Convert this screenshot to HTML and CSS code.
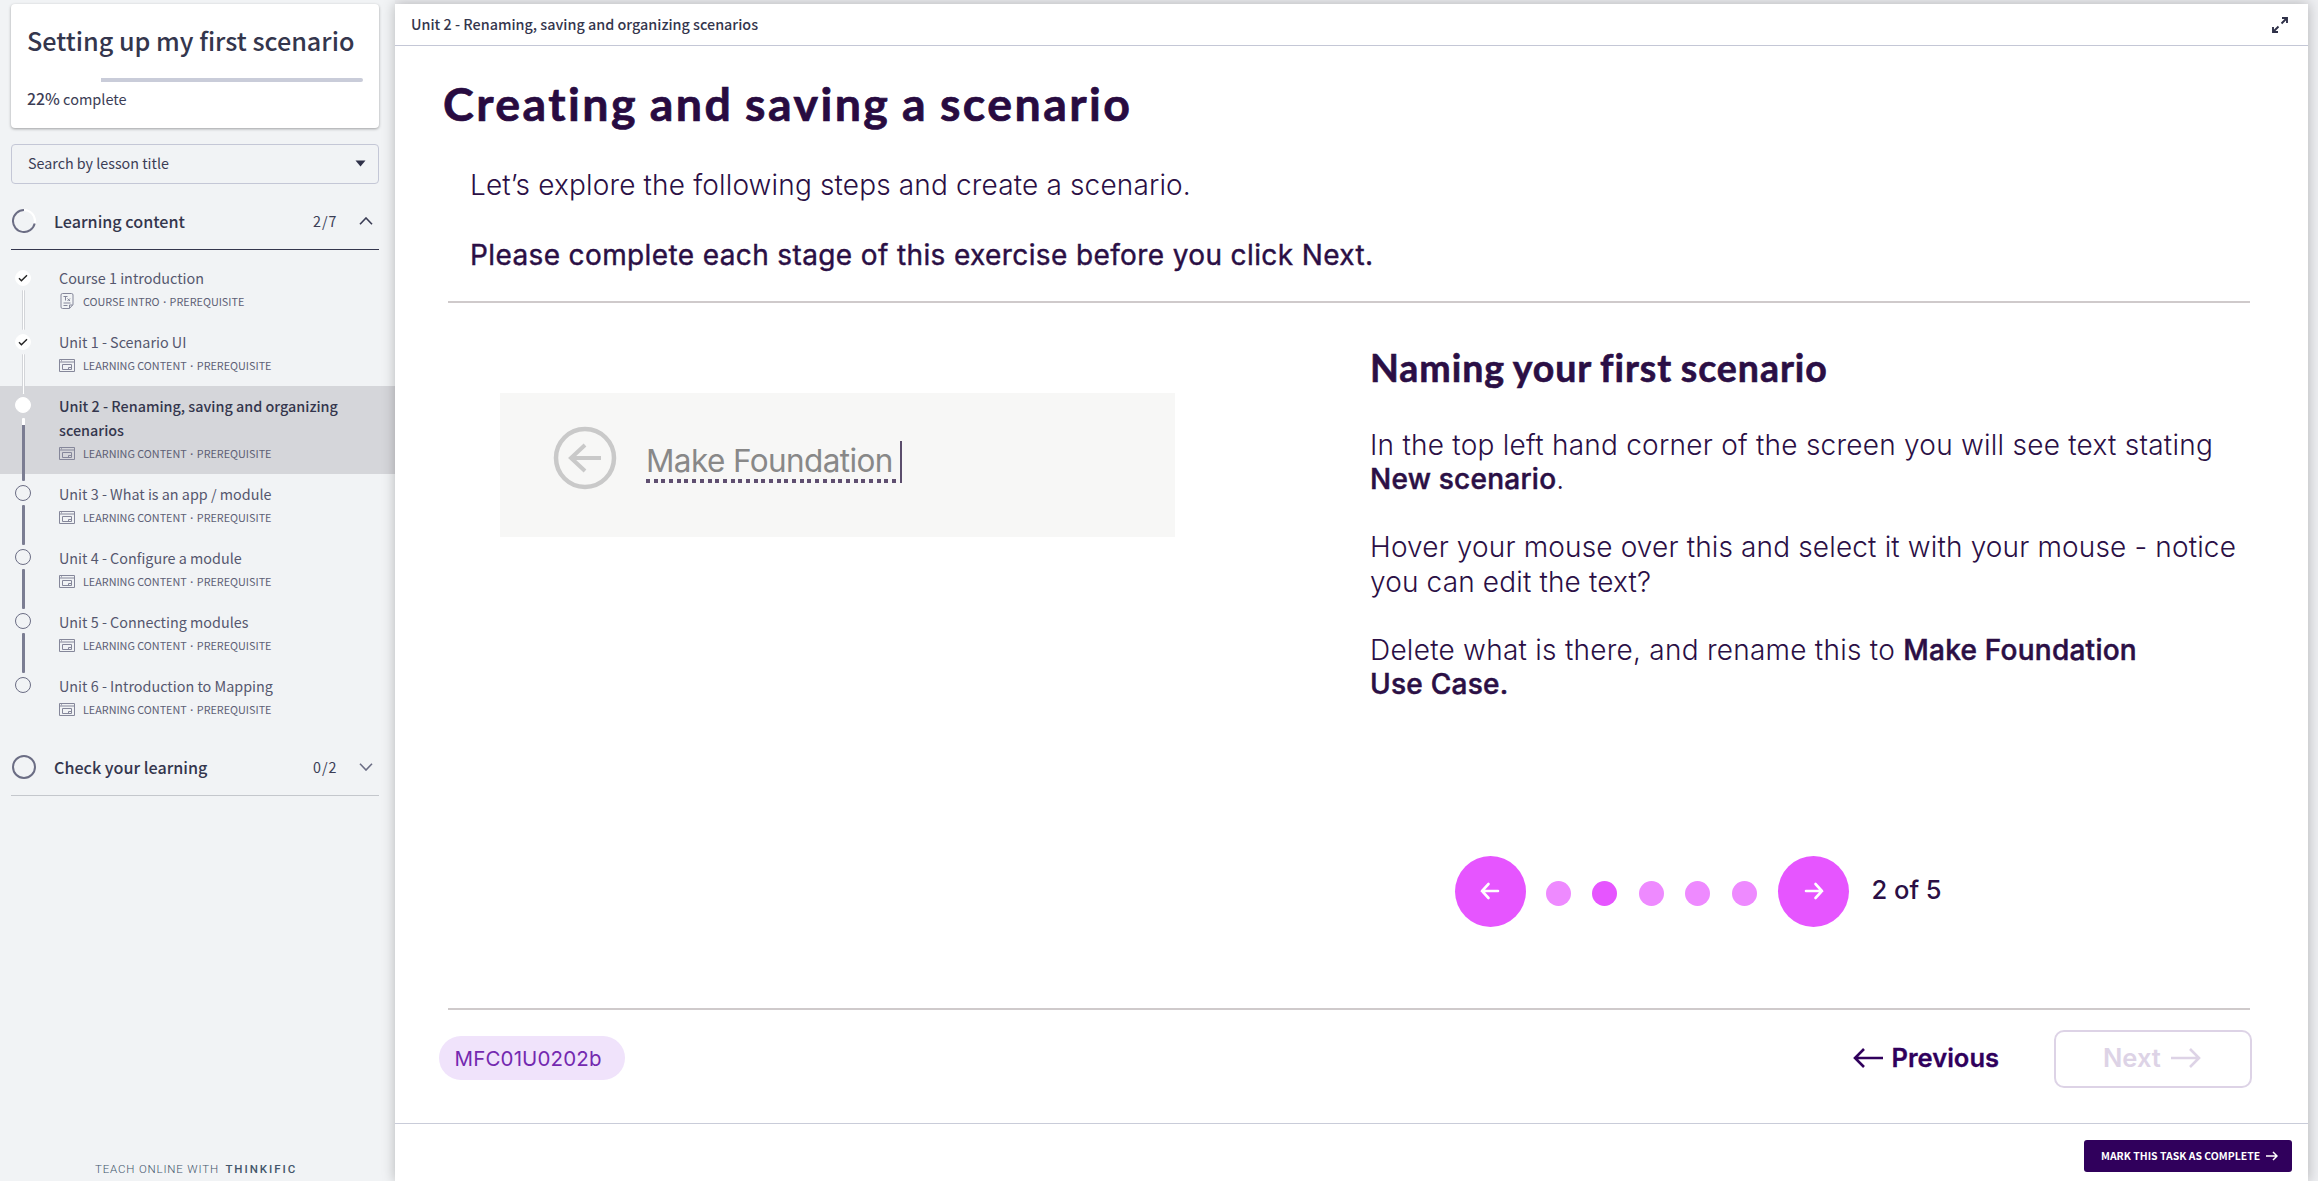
FILE: index.html
```html
<!DOCTYPE html>
<html lang="en">
<head>
<meta charset="utf-8">
<title>Setting up my first scenario</title>
<link rel="stylesheet" href="styles.css">
</head>
<body>
<svg class="defs" width="0" height="0">
  <symbol id="i-media" viewBox="0 0 16 13"><path d="M.5.5h15v12H.5zM.5 3h15M3.500 5.500h9v5h-9zM9.500 10.500v-2h3M2 1.800h1" fill="none" stroke="currentColor"/></symbol>
  <symbol id="i-text" viewBox="0 0 13 16"><path d="M2 .5h9a1.500 1.500 0 0 1 1.500 1.500v9.500l-3.500 4H2A1.500 1.500 0 0 1 .5 14V2A1.500 1.500 0 0 1 2 .5zM9 15.300V12h3.400M3 3.500h4M5 3.500v4M7 5.500l2.500 2.500M9.500 5.500L7 8M3 10h7M3 12.500h4" fill="none" stroke="currentColor"/></symbol>
  <symbol id="i-check" viewBox="0 0 10 8"><path d="M1 4.300l2.400 2.400L9 1.200" fill="none" stroke="currentColor" stroke-width="1.400"/></symbol>
  <symbol id="i-left" viewBox="0 0 30 20"><path d="M30 10H2M11 1L2 10l9 9" fill="none" stroke="currentColor" stroke-width="2.600"/></symbol>
  <symbol id="i-right" viewBox="0 0 30 20"><path d="M0 10h28M19 1l9 9-9 9" fill="none" stroke="currentColor" stroke-width="2.600"/></symbol>
</svg>
<div class="app">
  <aside class="sidebar">
    <section class="course-card">
      <h1 class="course-title">Setting up my first scenario</h1>
      <div class="progress"><div class="progress-rest" style="width:78%"></div></div>
      <p class="percent"><b>22%</b> complete</p>
    </section>
    <div class="search"><span>Search by lesson title</span><svg width="11" height="7" viewBox="0 0 11 7"><path d="M.5.500h10L5.500 6.500z" fill="#2f3149"/></svg></div>
    <header class="chapter open">
      <svg class="ring" width="24" height="24" viewBox="0 0 24 24"><circle cx="12" cy="12" r="11" fill="none" stroke="#fff" stroke-width="2"/><path d="M12 1a11 11 0 1 0 10.700 13.500" fill="none" stroke="#6b6d84" stroke-width="2"/></svg>
      <span class="chapter-name">Learning content</span><span class="count">2/7</span>
      <svg class="chev" width="14" height="8" viewBox="0 0 14 8"><path d="M1 7.300L7 1l6 6.300" fill="none" stroke="#3b3d55" stroke-width="1.600"/></svg>
    </header>
    <ul class="lessons">
      <li class="lesson done"><div class="rail"><span class="dot"><svg width="10" height="8"><use href="#i-check"/></svg></span><span class="line"></span></div><div class="info"><div class="name">Course 1 introduction</div><div class="meta"><svg width="16" height="16"><use href="#i-text"/></svg><span>COURSE INTRO <i>·</i> PREREQUISITE</span></div></div></li>
      <li class="lesson done"><div class="rail"><span class="dot"><svg width="10" height="8"><use href="#i-check"/></svg></span><span class="line"></span></div><div class="info"><div class="name">Unit 1 - Scenario UI</div><div class="meta"><svg width="16" height="13"><use href="#i-media"/></svg><span>LEARNING CONTENT <i>·</i> PREREQUISITE</span></div></div></li>
      <li class="lesson active"><div class="rail"><span class="dot"></span><span class="line"></span></div><div class="info"><div class="name">Unit 2 - Renaming, saving and organizing<br>scenarios</div><div class="meta"><svg width="16" height="13"><use href="#i-media"/></svg><span>LEARNING CONTENT <i>·</i> PREREQUISITE</span></div></div></li>
      <li class="lesson"><div class="rail"><span class="dot"></span><span class="line"></span></div><div class="info"><div class="name">Unit 3 - What is an app / module</div><div class="meta"><svg width="16" height="13"><use href="#i-media"/></svg><span>LEARNING CONTENT <i>·</i> PREREQUISITE</span></div></div></li>
      <li class="lesson"><div class="rail"><span class="dot"></span><span class="line"></span></div><div class="info"><div class="name">Unit 4 - Configure a module</div><div class="meta"><svg width="16" height="13"><use href="#i-media"/></svg><span>LEARNING CONTENT <i>·</i> PREREQUISITE</span></div></div></li>
      <li class="lesson"><div class="rail"><span class="dot"></span><span class="line"></span></div><div class="info"><div class="name">Unit 5 - Connecting modules</div><div class="meta"><svg width="16" height="13"><use href="#i-media"/></svg><span>LEARNING CONTENT <i>·</i> PREREQUISITE</span></div></div></li>
      <li class="lesson"><div class="rail"><span class="dot"></span></div><div class="info"><div class="name">Unit 6 - Introduction to Mapping</div><div class="meta"><svg width="16" height="13"><use href="#i-media"/></svg><span>LEARNING CONTENT <i>·</i> PREREQUISITE</span></div></div></li>
    </ul>
    <header class="chapter">
      <svg class="ring" width="24" height="24" viewBox="0 0 24 24"><circle cx="12" cy="12" r="11" fill="none" stroke="#6b6d84" stroke-width="2"/></svg>
      <span class="chapter-name">Check your learning</span><span class="count">0/2</span>
      <svg class="chev" width="14" height="8" viewBox="0 0 14 8"><path d="M1 .700L7 7l6-6.300" fill="none" stroke="#6b6d84" stroke-width="1.600"/></svg>
    </header>
    <footer class="brand"><span>TEACH ONLINE WITH</span><b>THINKIFIC</b></footer>
  </aside>
  <main class="main">
    <header class="topbar"><span>Unit 2 - Renaming, saving and organizing scenarios</span>
      <svg width="16" height="16" viewBox="0 0 16 16"><path d="M9.500 6.500l5-5M10 1h5v5M6.500 9.500l-5 5M1 10v5h5" fill="none" stroke="#2f3149" stroke-width="1.900"/></svg></header>
    <article class="slide">
      <h2 class="slide-title">Creating and saving a scenario</h2>
      <p class="lead">Let’s explore the following steps and create a scenario.</p>
      <p class="lead strong">Please complete each stage of this exercise before you click Next.</p>
      <div class="rule"></div>
      <div class="columns">
        <figure class="shot">
          <svg width="64" height="64" viewBox="0 0 64 64"><circle cx="32" cy="32" r="29" fill="none" stroke="#c9c9c9" stroke-width="4.500"/><path d="M48 32H18M32 19L18 32l14 13" fill="none" stroke="#c9c9c9" stroke-width="4"/></svg>
          <span class="field">Make Foundation</span>
        </figure>
        <section class="copy">
          <h3>Naming your first scenario</h3>
          <p>In the top left hand corner of the screen you will see text stating<br><b>New scenario</b>.</p>
          <p>Hover your mouse over this and select it with your mouse - notice<br>you can edit the text?</p>
          <p>Delete what is there, and rename this to <b>Make Foundation</b><br><b>Use Case.</b></p>
          <nav class="pager">
            <span class="round"><svg width="20" height="18" viewBox="0 0 20 18"><path d="M18 9H2M8.500 2L2 9l6.500 7" fill="none" stroke="#fff" stroke-width="2.600" stroke-linecap="round"/></svg></span>
            <span class="pip"></span><span class="pip on"></span><span class="pip"></span><span class="pip"></span><span class="pip"></span>
            <span class="round"><svg width="20" height="18" viewBox="0 0 20 18"><path d="M2 9h16M11.500 2L18 9l-6.500 7" fill="none" stroke="#fff" stroke-width="2.600" stroke-linecap="round"/></svg></span>
            <span class="page">2 of 5</span>
          </nav>
        </section>
      </div>
      <div class="rule"></div>
      <div class="controls">
        <span class="code">MFC01U0202b</span>
        <span class="prev"><svg width="30" height="20"><use href="#i-left"/></svg><span>Previous</span></span>
        <span class="next"><span>Next</span><svg width="30" height="20"><use href="#i-right"/></svg></span>
      </div>
    </article>
    <footer class="bottombar"><span class="complete"><span>MARK THIS TASK AS COMPLETE</span><svg width="12" height="10" viewBox="0 0 12 10"><path d="M0 5h11M7 1l4 4-4 4" fill="none" stroke="#fff" stroke-width="1.500"/></svg></span></footer>
  </main>
</div>
</body>
</html>
```
FILE: styles.css
```css
* { box-sizing: border-box; }
body, h1, h2, h3, p, ul, figure { margin: 0; padding: 0; }
body { background: #f1f3f5; font-family: "Noto Sans CJK SC", sans-serif; color: #3b3d55; }
svg { display: block; flex: none; }
.defs { position: absolute; }
.app { display: flex; height: 1181px; padding: 4px 10px 0 0; overflow: hidden; background: linear-gradient(90deg, #f1f3f5 395px, #edeef1 395px); }

/* Course navigation */
.sidebar { width: 395px; flex: none; display: flex; flex-direction: column; }
.course-card { margin: 0 16px 0 11px; height: 124px; padding: 21px 16px 0 16px; background: #fff; border-radius: 4px; box-shadow: 0 1px 3px rgba(0,0,0,.35); }
.course-title { font-size: 25.200px; line-height: 30px; font-weight: 500; white-space: nowrap; color: #34364d; }
.progress { margin-top: 23px; height: 4px; display: flex; justify-content: flex-end; }
.progress-rest { background: #c9ccd9; border-radius: 0 2px 2px 0; }
.percent { margin-top: 7px; font-size: 14.500px; line-height: 20px; }
.percent b { font-size: 15.800px; font-weight: 500; }
.search { margin: 16px 16px 0 11px; height: 40px; padding: 0 12px 2px 16px; border: 1px solid #c4c7d6; border-radius: 4px; display: flex; align-items: center; justify-content: space-between; font-size: 14.300px; }
.search span { padding-bottom: 1px; }
.chapter { margin: 0 16px 0 11px; height: 66px; padding: 25px 6px 0 1px; display: flex; align-items: flex-start; border-bottom: 1px solid #c4c7cc; }
.chapter.open { border-color: #34364d; }
.chapter-name { margin-left: 18px; flex: 1; font-size: 16.150px; font-weight: 500; line-height: 24px; color: #34364d; }
.count { font-size: 14.300px; letter-spacing: 1px; line-height: 24px; margin-right: 21.500px; }
.chev { margin-top: 8px; }
.lessons { list-style: none; margin-top: 8px; }
.lesson { height: 64px; display: flex; padding-left: 15px; color: #55576e; }
.lesson.active { height: 88px; background: #d5d6da; color: #34364d; }
.rail { width: 16px; display: flex; flex-direction: column; align-items: center; padding-top: 11px; }
.done .rail { padding-top: 12px; }
.dot { width: 16px; height: 16px; flex: none; border: 1px solid #6b6d84; border-radius: 50%; display: flex; align-items: center; justify-content: center; }
.done .dot, .active .dot { background: #fff; border-color: #fff; color: #222; }
.line { width: 3px; height: 40px; margin-top: 4px; flex: none; border-radius: 1px; background: #7b7d92; position: relative; z-index: 1; }
.done .line { background: #fff; border: solid #d3d5d9; border-width: 0 1px; }
.active .line { height: 63px; margin-top: 5px; background: linear-gradient(#fff 7px, #7b7d92 7px); }
.info { margin-left: 28px; padding-top: 8px; }
.name { font-size: 14.360px; line-height: 24px; white-space: nowrap; }
.active .name { font-weight: 500; }
.meta { display: flex; align-items: center; gap: 8px; height: 20px; margin-top: 1px; font-size: 10.800px; line-height: 20px; white-space: nowrap; color: #5d5f75; }
.meta svg { color: #85879a; }
.meta i { font: 700 10px "Open Sans", sans-serif; margin: 0 1.200px; }
.brand { margin: auto 0 0 95px; height: 23px; font: 300 11.500px/23px Roboto, sans-serif; letter-spacing: .830px; color: #43566b; white-space: nowrap; }
.brand b { font-weight: 500; letter-spacing: 1.950px; margin-left: 6.500px; }

/* Lesson panel */
.main { flex: 1; display: flex; flex-direction: column; background: #fff; box-shadow: 0 0 12px rgba(0,0,0,.25); }
.topbar { height: 42px; flex: none; border-bottom: 1px solid #c4c7d6; padding: 0 20px 0 16px; display: flex; align-items: center; justify-content: space-between; font-size: 14.360px; font-weight: 500; color: #34364d; }
.topbar span { padding-bottom: 2px; }
.slide { height: 1077px; flex: none; padding: 27px 56px 0 44px; font-family: Inter, sans-serif; color: #2b0f45; white-space: nowrap; display: flex; flex-direction: column; }
.slide-title { font: 700 46.500px/60px Lato, sans-serif; margin-left: 4px; color: #280b41; letter-spacing: 2.450px; word-spacing: -2px; -webkit-text-stroke: .7px; }
.lead { margin: 35px 0 0 31px; font-size: 28px; line-height: 34px; font-weight: 300; letter-spacing: .150px; }
.lead.strong { margin-top: 36px; font-weight: 400; letter-spacing: .380px; -webkit-text-stroke: .4px; }
.rule { height: 2px; flex: none; margin: 0 2px 0 9px; background: #cfcacb; }
.lead + .rule { margin-top: 29px; }
.columns { height: 705px; display: flex; }
.shot { width: 675px; height: 144px; margin: 90px 195px 0 61px; padding: 33px 0 0 53px; display: flex; background: #f7f7f6; }
.field { margin: 15px 0 0 29px; width: 256px; height: 42px; border-right: 2px solid #5b4d6c; font: 400 31.500px/40px Inter, sans-serif; letter-spacing: -.6px; color: #888; background: repeating-linear-gradient(90deg, #5f4f70 0 4px, transparent 4px 7.690px) 0 100%/100% 4px no-repeat; }
.copy { padding-top: 42px; }
.copy h3 { font: 700 37.500px/46px Lato, sans-serif; margin-bottom: 37px; letter-spacing: .950px; word-spacing: -1.500px; -webkit-text-stroke: .6px; }
.copy p { font-size: 28px; line-height: 34.150px; font-weight: 300; margin-bottom: 34.150px; letter-spacing: .150px; }
.copy p:nth-of-type(1) { letter-spacing: .240px; }
.copy p:nth-of-type(3) { letter-spacing: .250px; }
.copy b { font-weight: 500; -webkit-text-stroke: .5px; }
.pager { display: flex; align-items: center; margin: 154.500px 0 0 84.500px; }
.round { width: 71px; height: 71px; border-radius: 50%; background: #e655ff; display: flex; align-items: center; justify-content: center; margin-right: 20px; }
.pip { width: 25px; height: 25px; border-radius: 50%; background: #ee8aff; margin: 4px 21.600px 0 0; }
.pip.on { background: #e655ff; }
.page { margin: -3px 0 0 2px; font-size: 25.500px; font-weight: 500; }
.controls { display: flex; align-items: center; height: 58px; margin-top: 20px; }
.code { width: 186px; height: 44px; border-radius: 22px; background: #f0e3fb; color: #7429b0; font-size: 20.500px; line-height: 46px; padding-left: 15.500px; margin: 0 auto 2px 0; letter-spacing: .150px; }
.prev, .next { display: flex; align-items: center; font-size: 25.500px; font-weight: 600; color: #30005c; }
.prev { gap: 9px; margin-right: 55px; padding-bottom: 3px; -webkit-text-stroke: .3px; }
.next { width: 198px; height: 58px; border: 2px solid #ddd3e6; border-radius: 10px; color: #ddd3e6; gap: 10px; padding: 0 0 3px 47px; }
.bottombar { flex: 1; border-top: 1px solid #c9ccd9; padding: 16px 16px 0 0; display: flex; justify-content: flex-end; align-items: flex-start; }
.complete { width: 208px; height: 32px; border-radius: 3px; background: #30005c; color: #fff; font-size: 10.450px; font-weight: 700; padding: 0 0 1px 17px; display: flex; align-items: center; gap: 6px; white-space: nowrap; }
```
